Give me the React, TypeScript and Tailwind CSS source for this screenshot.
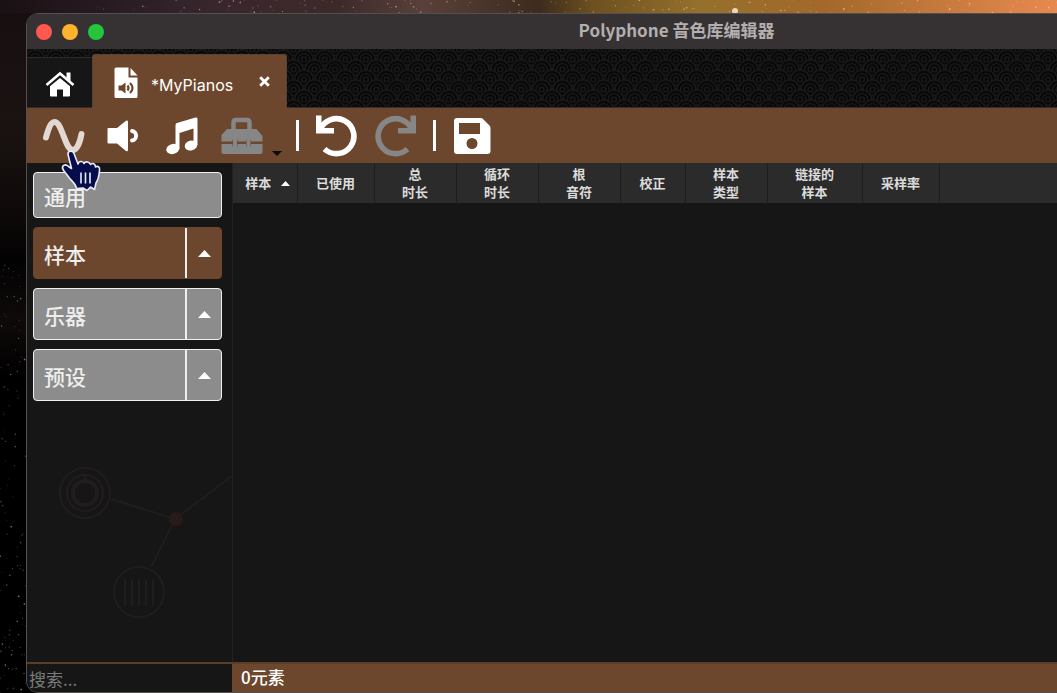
import { useState } from 'react'
import type { ReactNode } from 'react'

type Section = { id: string; label: string; expandable: boolean }
type Column = { id: string; lines: string[]; width: string; sorted?: boolean }
type Star = { x: number; y: number; r: number; o: number }

const SECTIONS: Section[] = [
  { id: 'general', label: '通用', expandable: false },
  { id: 'samples', label: '样本', expandable: true },
  { id: 'instruments', label: '乐器', expandable: true },
  { id: 'presets', label: '预设', expandable: true },
]

const COLUMNS: Column[] = [
  { id: 'sample', lines: ['样本'], width: 'w-16', sorted: true },
  { id: 'used', lines: ['已使用'], width: 'w-[77px]' },
  { id: 'total', lines: ['总', '时长'], width: 'w-[82px]' },
  { id: 'loop', lines: ['循环', '时长'], width: 'w-[82px]' },
  { id: 'root', lines: ['根', '音符'], width: 'w-[82px]' },
  { id: 'correction', lines: ['校正'], width: 'w-[65px]' },
  { id: 'type', lines: ['样本', '类型'], width: 'w-[82px]' },
  { id: 'link', lines: ['链接的', '样本'], width: 'w-[95px]' },
  { id: 'rate', lines: ['采样率'], width: 'w-[77px]' },
]

// Small seeded generator so the sky is the same on every render
function makeStars(count: number, seed: number, w: number, h: number, top: number): Star[] {
  let s = seed
  const next = () => {
    s = (s * 16807) % 2147483647
    return s / 2147483647
  }
  return Array.from({ length: count }, () => ({
    x: next() * w,
    y: top + next() * h,
    r: 0.4 + next() * 0.5,
    o: 0.15 + next() * 0.5,
  }))
}

const SIDE_STARS = makeStars(110, 4211, 26, 430, 262)
const TOP_STARS = makeStars(150, 977, 980, 13, 0)

function Sky() {
  return (
    <div className="absolute inset-0 bg-[linear-gradient(180deg,#170e10_0px,#1a1312_120px,#100b0a_200px,#030202_260px,#0e0a09_320px,#000_380px)]">
      <div className="h-[13px] bg-[linear-gradient(90deg,#1a1114_0%,#271b22_10%,#38262d_20%,#3c2a2a_32%,#59403a_40%,#3c2b1e_51%,#6d501f_56%,#94702c_66%,#a3682a_78%,#c0763a_87%,#e8894f_100%)]" />
      <svg className="absolute inset-0 h-full w-full" aria-hidden="true">
        {SIDE_STARS.map((s, i) => (
          <circle key={i} cx={s.x} cy={s.y} r={s.r} fill="#b9c0c0" opacity={s.o} />
        ))}
        {TOP_STARS.map((s, i) => (
          <circle key={i} cx={s.x + 90} cy={s.y} r={s.r} fill="#ffe2b8" opacity={s.o} />
        ))}
        <circle cx="735" cy="11" r="3" fill="#fff3dc" opacity="0.8" />
      </svg>
    </div>
  )
}

function Waves() {
  const rows = [-10, 0, 10, 20, 30]
  return (
    <svg className="absolute inset-0 h-full w-full" aria-hidden="true">
      <defs>
        <pattern
          id="waves"
          width="20.67"
          height="20"
          patternUnits="userSpaceOnUse"
          patternTransform="translate(8.3 10.5)"
        >
          <rect width="20.67" height="20" fill="#000" />
          {rows.map((y) => {
            const xs = y % 20 === 0 ? [0, 20.67] : [-10.33, 10.33, 31]
            return xs.map((x) => (
              <g key={`${x}:${y}`} fill="#030303" stroke="#191919" strokeWidth="1.8">
                <circle cx={x} cy={y} r="9.3" />
                <circle cx={x} cy={y} r="5.8" />
                <circle cx={x} cy={y} r="2.4" />
              </g>
            ))
          })}
        </pattern>
      </defs>
      <rect width="100%" height="100%" fill="url(#waves)" />
    </svg>
  )
}

function HomeIcon() {
  return (
    <svg width="30" height="26" viewBox="0 0 30 26" fill="#fff" aria-hidden="true">
      <path d="M15 7 25 15.300V24.500Q25 25.500 24 25.500H18V18.500H12V25.500H6Q5 25.500 5 24.500V15.300Z" />
      <path d="M21.500 1.500H25.500V10L21.500 7Z" />
      <path d="M1.500 14 15 2.500 28.500 14" fill="none" stroke="#fff" strokeWidth="2.600" />
    </svg>
  )
}

function FileIcon() {
  return (
    <svg width="24" height="32" viewBox="0 0 24 32" aria-hidden="true">
      <path d="M2 0.500H14.500V10.500H23.500V29.500Q23.500 31 22 31H2Q0.500 31 0.500 29.500V2Q0.500 0.500 2 0.500Z" fill="#fff" />
      <path d="M16.500 1 23.500 8.500H16.500Z" fill="#fff" />
      <path d="M4.500 18.500H7.500L11.500 15.500V26.500L7.500 23.500H4.500Z" fill="#6c472d" />
      <path d="M13.500 18.500Q15.500 21 13.500 23.500M16 16Q21 21 16 26" fill="none" stroke="#6c472d" strokeWidth="2.200" />
    </svg>
  )
}

function WaveIcon() {
  return (
    <svg width="42" height="36" viewBox="0 0 42 36" aria-hidden="true">
      <path
        d="M3 19.500C5 12 7.500 4 11.500 4C16 4 18 12 21 19C24 27 26 32 30 32C34 32 37 24 38.500 16"
        fill="none"
        stroke="#e2d8d1"
        strokeWidth="6"
        strokeLinecap="round"
      />
    </svg>
  )
}

function SpeakerIcon() {
  return (
    <svg width="32" height="32" viewBox="0 0 32 32" fill="#fff" aria-hidden="true">
      <path d="M1.500 8H10L19 0.800Q21 0 21 2V30Q21 32 19 31L10 23.500H1.500Q0.500 23.500 0.500 22.500V9Q0.500 8 1.500 8Z" />
      <path d="M25 11C30.500 11.500 30.500 20 25 20.500" fill="none" stroke="#fff" strokeWidth="3.800" strokeLinecap="round" />
    </svg>
  )
}

function NotesIcon() {
  return (
    <svg width="32" height="38" viewBox="0 0 32 38" fill="#fff" aria-hidden="true">
      <path d="M9.500 8Q9.500 6.500 11 6L29.500 0.600Q31.500 0 31.500 2V28H27.500V11.500L13.500 16V32H9.500Z" />
      <ellipse cx="6.800" cy="32" rx="6.600" ry="5" transform="rotate(-15 6.800 32)" />
      <ellipse cx="25" cy="28.500" rx="6.300" ry="5" transform="rotate(-15 25 28.500)" />
    </svg>
  )
}

function ToolboxIcon() {
  return (
    <svg width="42" height="38" viewBox="0 0 42 38" fill="#868686" aria-hidden="true">
      <path d="M12.500 13V5.500Q12.500 3 15 3H26Q28.500 3 28.500 5.500V13" fill="none" stroke="#868686" strokeWidth="4.500" />
      <path d="M6 12H35.500L41.500 19V24.500H30V22.500H25V24.500H16.500V22.500H11.500V24.500H0.500V18Z" />
      <path d="M0.500 27H11.500V29.500H16.500V27H25V29.500H30V27H41.500V35Q41.500 37 39.500 37H2.500Q0.500 37 0.500 35Z" />
      <path d="M12 22H16V30H12ZM25.500 22H29.500V30H25.500Z" />
    </svg>
  )
}

function TurnIcon({ flipped, color }: { flipped?: boolean; color: string }) {
  return (
    <svg width="42" height="42" viewBox="0 0 42 42" className={flipped ? '-scale-x-100' : ''} aria-hidden="true">
      <path d="M1 0.500H6.500V13H19V18.500H1Z" fill={color} />
      <path d="M5 15A17.500 17.500 0 1 1 9.500 34" fill="none" stroke={color} strokeWidth="5.600" />
    </svg>
  )
}

function SaveIcon() {
  return (
    <svg width="38" height="38" viewBox="0 0 38 38" aria-hidden="true">
      <path
        fillRule="evenodd"
        d="M4 1H28Q29 1 30 2L36.500 8.500Q37.500 9.500 37.500 11V34Q37.500 37 34.500 37H4Q1 37 1 34V4Q1 1 4 1ZM6 6V17H27V6ZM19 21A5.500 5.500 0 1 0 19 32A5.500 5.500 0 1 0 19 21Z"
        fill="#fff"
      />
    </svg>
  )
}

function CaretUp({ small }: { small?: boolean }) {
  return (
    <svg width={small ? 9 : 13} height={small ? 5 : 7} viewBox="0 0 13 7" aria-hidden="true">
      <path d="M6.500 0 13 7H0Z" fill="#fff" />
    </svg>
  )
}

function HandCursor() {
  return (
    <svg width="40" height="42" viewBox="0 0 40 42" className="pointer-events-none absolute left-[35px] top-[137px] z-10" aria-hidden="true">
      <path
        d="M7 4.500C6.500 0.500 12 0 13 3.500L17 14C17.500 11 22 10.500 23 13.500C24.500 11 28.500 11.500 29.500 14.500C31.500 12.500 34.500 13.500 34.500 17C37 15.500 39 17 38.500 20.500C38 26 37 30 35 33L33.500 39.500L29.500 37L26 40.500L22 38L15.500 38.500C15 34 11 31.500 8 27.500C6 24 2 21 1.500 18C1.500 14.500 5 14 7.500 16.500L10.500 18.500Z"
        fill="#060d4a"
        stroke="#e6ecf8"
        strokeWidth="1.600"
        strokeLinejoin="round"
      />
      <path d="M20 22.500V33.500M24.500 22.500V33.500M29 22.500V33.500" stroke="#e6ecf8" strokeWidth="1.600" />
    </svg>
  )
}

function Watermark() {
  return (
    <svg width="205" height="200" viewBox="0 0 205 200" className="absolute bottom-0 left-0" fill="none" stroke="#201d1c" strokeWidth="2" aria-hidden="true">
      <circle cx="58" cy="31" r="25" />
      <circle cx="58" cy="31" r="18" />
      <circle cx="58" cy="31" r="12" strokeWidth="4" />
      <path d="M58 12V20M84 37 148 57 205 14M148 57 124 105" />
      <circle cx="149" cy="57" r="6" fill="#271b1b" stroke="#271b1b" />
      <circle cx="112" cy="130" r="25" />
      <path d="M98 117V144M105 117V144M112 117V144M119 117V144M126 117V144" />
    </svg>
  )
}

function ToolButton({ label, disabled, className, children }: { label: string; disabled?: boolean; className?: string; children: ReactNode }) {
  return (
    <button type="button" aria-label={label} disabled={disabled} className={`flex shrink-0 items-center justify-center ${className ?? ''}`}>
      {children}
    </button>
  )
}

function TitleBar() {
  return (
    <header className="relative flex h-[35px] shrink-0 items-center justify-center bg-[#363233]">
      <div className="absolute left-[9px] flex gap-[10px]">
        <button type="button" aria-label="关闭" className="size-4 rounded-full bg-[#fe5850]" />
        <button type="button" aria-label="最小化" className="size-4 rounded-full bg-[#fdb32b]" />
        <button type="button" aria-label="缩放" className="size-4 rounded-full bg-[#27c53c]" />
      </div>
      <h1 className="pb-1 text-[17px] leading-6 font-bold text-[#b3afb0]">Polyphone 音色库编辑器</h1>
    </header>
  )
}

function TabBar() {
  return (
    <nav className="relative flex h-[59px] shrink-0 items-end border-b border-[#3b2c22]">
      <Waves />
      <button type="button" aria-label="主页" className="relative flex h-[50px] w-[65px] items-center justify-center border-t border-[#2c2c2c] bg-[#161616] pt-[2px]">
        <HomeIcon />
      </button>
      <div className="relative -mb-px flex h-[54px] w-[195px] items-center rounded-t-[3px] border border-b-0 border-[#5b4130] bg-[#6c472d] pt-[2px] pl-[21px]">
        <button type="button" className="flex items-center gap-[13px] font-['Inter','Noto_Sans_CJK_SC',sans-serif] text-base text-white">
          <FileIcon />
          <span className="pt-1">*MyPianos</span>
        </button>
        <button type="button" aria-label="关闭标签页" className="mr-4 mb-[2px] ml-auto">
          <svg width="11" height="11" viewBox="0 0 11 11" aria-hidden="true">
            <path d="M1.200 1.200 9.800 9.800M9.800 1.200 1.200 9.800" stroke="#fff" strokeWidth="2.800" />
          </svg>
        </button>
      </div>
    </nav>
  )
}

function Toolbar() {
  return (
    <div role="toolbar" className="flex h-[55px] shrink-0 items-center bg-[#6c472d] pl-4">
      <ToolButton label="添加样本"><WaveIcon /></ToolButton>
      <ToolButton label="添加乐器" className="ml-[22px]"><SpeakerIcon /></ToolButton>
      <ToolButton label="添加预设" className="ml-[27px]"><NotesIcon /></ToolButton>
      <ToolButton label="工具箱" disabled className="ml-[23px] gap-[9px]">
        <ToolboxIcon />
        <svg width="10" height="5" viewBox="0 0 10 5" className="mt-9" aria-hidden="true">
          <path d="M0 0H10L5 5Z" fill="#0b0806" />
        </svg>
      </ToolButton>
      <span className="ml-[14px] h-[31px] w-[3px] bg-white" />
      <ToolButton label="撤销" className="ml-4"><TurnIcon color="#fff" /></ToolButton>
      <ToolButton label="重做" disabled className="ml-[18px]"><TurnIcon color="#868686" flipped /></ToolButton>
      <span className="ml-4 h-[31px] w-[3px] bg-white" />
      <ToolButton label="保存" className="ml-[17px]"><SaveIcon /></ToolButton>
    </div>
  )
}

function Sidebar() {
  const [active, setActive] = useState('samples')

  return (
    <aside className="relative flex w-[206px] shrink-0 flex-col gap-[9px] border-r border-[#222] pt-[9px] pr-[10px] pl-[6px]">
      <Watermark />
      {SECTIONS.map((s) => {
        const on = s.id === active
        return (
          <div
            key={s.id}
            className={`relative flex overflow-hidden rounded-[4px] border ${s.expandable ? 'h-[52px]' : 'h-[46px]'} ${
              on ? 'border-[#6c472d] bg-[#6c472d]' : 'border-[#f0f0f0] bg-[#8c8c8c]'
            }`}
          >
            <button
              type="button"
              onClick={() => setActive(s.id)}
              className="flex-1 pt-[2px] pl-[10px] text-left text-[21px] leading-7 font-medium text-[#eee]"
            >
              {s.label}
            </button>
            {s.expandable && (
              <button type="button" aria-label={`折叠${s.label}`} className="flex w-9 items-center justify-center border-l-2 border-[#eee]">
                <CaretUp />
              </button>
            )}
          </div>
        )
      })}
    </aside>
  )
}

function SampleTable() {
  return (
    <main className="min-w-0 flex-1">
      <table className="w-full table-fixed border-collapse">
        <thead>
          <tr className="h-10 bg-[#2b2b2b]">
            {COLUMNS.map((c) => (
              <th
                key={c.id}
                scope="col"
                className={`border-r border-[#1d1d1d] p-0 text-center align-middle text-[13px] leading-[18px] font-bold text-[#dcdcdc] ${c.width}`}
              >
                <span className={c.sorted ? 'flex items-center justify-center gap-[10px] pl-[6px]' : ''}>
                  <span>
                    {c.lines.map((line) => (
                      <span key={line} className="block">{line}</span>
                    ))}
                  </span>
                  {c.sorted && <CaretUp small />}
                </span>
              </th>
            ))}
            <td />
          </tr>
        </thead>
      </table>
    </main>
  )
}

function StatusBar() {
  return (
    <footer className="flex h-[30px] shrink-0 border-t-2 border-[#5a3d29]">
      <input
        type="text"
        aria-label="搜索"
        placeholder="搜索..."
        className="h-full w-[205px] bg-[#161616] pl-[2px] text-[17px] leading-7 text-white outline-none placeholder:text-[#7b7b7b]"
      />
      <p className="flex flex-1 items-center bg-[#6c472d] pb-[2px] pl-[9px] text-[17px] leading-6 font-medium text-white">0元素</p>
    </footer>
  )
}

export default function App() {
  return (
    <div className="relative flex min-h-screen overflow-hidden bg-black pt-[13px] font-['Noto_Sans_CJK_SC',sans-serif]">
      <Sky />
      {/* The window runs past the right edge of the desktop */}
      <div className="relative -mr-[270px] ml-[26px] flex min-w-0 flex-1 flex-col">
        <div className="flex flex-1 flex-col overflow-hidden rounded-[12px] border border-[#55504f] bg-[#161616]">
          <TitleBar />
          <TabBar />
          <Toolbar />
          <div className="flex flex-1">
            <Sidebar />
            <SampleTable />
          </div>
          <StatusBar />
        </div>
        <HandCursor />
      </div>
    </div>
  )
}
